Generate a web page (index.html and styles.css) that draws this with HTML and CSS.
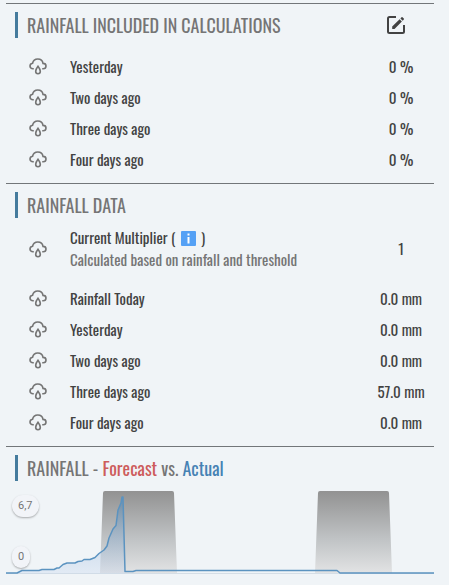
FILE: index.html
```html
<!DOCTYPE html>
<html lang="en">
<head>
  <meta charset="UTF-8">
  <meta name="viewport" content="width=device-width, initial-scale=1.0">
  <title>Rainfall</title>
  <link rel="stylesheet" href="styles.css">
</head>
<body>
  <!-- Shared icons -->
  <svg class="icon-defs" aria-hidden="true">
    <symbol id="icon-rain" viewBox="0 0 18 17">
      <path d="M4.800 10.800H4C2.200 10.800 1 9.600 1 8C1 6.500 2.100 5.400 3.600 5.200C4.100 2.700 6.200 1 8.800 1C11.500 1 13.600 2.800 14 5.400C15.800 5.400 17 6.500 17 8C17 9.700 15.800 10.800 14.200 10.800H13.200"/>
      <path d="M9 8.300C9 8.300 6.700 11.400 6.700 13.200C6.700 14.600 7.700 15.700 9 15.700C10.300 15.700 11.300 14.600 11.300 13.200C11.300 11.400 9 8.300 9 8.300Z"/>
    </symbol>
  </svg>

  <main class="card">
    <section class="section">
      <header class="section-header">
        <h2>RAINFALL INCLUDED IN CALCULATIONS</h2>
        <button class="btn-edit" type="button" aria-label="Edit">
          <svg viewBox="0 0 18 18">
            <path class="frame" d="M9 1H2.500Q1 1 1 2.500V15.500Q1 17 2.500 17H15.500Q17 17 17 15.500V9"/>
            <path class="pencil" d="M5.200 10.600L12.600 3.200L14.900 5.500L7.500 12.900H5.200ZM13.400 2.400L14.500 1.300Q15 .8 15.500 1.300L16.800 2.600Q17.300 3.100 16.800 3.600L15.700 4.700Z"/>
          </svg>
        </button>
      </header>
      <ul class="rows">
        <li class="row"><svg class="icon"><use href="#icon-rain"/></svg><span class="name">Yesterday</span><span class="value">0 %</span></li>
        <li class="row"><svg class="icon"><use href="#icon-rain"/></svg><span class="name">Two days ago</span><span class="value">0 %</span></li>
        <li class="row"><svg class="icon"><use href="#icon-rain"/></svg><span class="name">Three days ago</span><span class="value">0 %</span></li>
        <li class="row"><svg class="icon"><use href="#icon-rain"/></svg><span class="name">Four days ago</span><span class="value">0 %</span></li>
      </ul>
    </section>

    <section class="section">
      <header class="section-header">
        <h2>RAINFALL DATA</h2>
      </header>
      <ul class="rows">
        <li class="row row-tall">
          <svg class="icon"><use href="#icon-rain"/></svg>
          <div class="name">
            <div>Current Multiplier ( <svg class="info" viewBox="0 0 15 15" role="img" aria-label="info"><rect width="15" height="15" rx="1"/><path d="M6.500 2.500H8.500V4.500H6.500ZM6.500 6H8.500V12.500H6.500Z"/></svg> )</div>
            <div class="secondary">Calculated based on rainfall and threshold</div>
          </div>
          <span class="value">1</span>
        </li>
        <li class="row"><svg class="icon"><use href="#icon-rain"/></svg><span class="name">Rainfall Today</span><span class="value">0.0 mm</span></li>
        <li class="row"><svg class="icon"><use href="#icon-rain"/></svg><span class="name">Yesterday</span><span class="value">0.0 mm</span></li>
        <li class="row"><svg class="icon"><use href="#icon-rain"/></svg><span class="name">Two days ago</span><span class="value">0.0 mm</span></li>
        <li class="row"><svg class="icon"><use href="#icon-rain"/></svg><span class="name">Three days ago</span><span class="value">57.0 mm</span></li>
        <li class="row"><svg class="icon"><use href="#icon-rain"/></svg><span class="name">Four days ago</span><span class="value">0.0 mm</span></li>
      </ul>
    </section>

    <section class="section">
      <header class="section-header">
        <h2>RAINFALL - <span class="forecast">Forecast</span> vs. <span class="actual">Actual</span></h2>
      </header>
      <div class="chart">
        <svg class="plot" viewBox="0 0 428 85" preserveAspectRatio="none" role="img" aria-label="Forecast and actual rainfall">
          <defs>
            <linearGradient id="night" x1="0" y1="0" x2="0" y2="1">
              <stop offset="0" stop-color="#929292"/>
              <stop offset="0.6" stop-color="#c1c4c6"/>
              <stop offset="1" stop-color="#e2e3e4"/>
            </linearGradient>
            <linearGradient id="rain" x1="0" y1="0" x2="0" y2="1">
              <stop offset="0" stop-color="#4682b4" stop-opacity="0.5"/>
              <stop offset="1" stop-color="#b8cdec" stop-opacity="0.25"/>
            </linearGradient>
          </defs>
          <path class="baseline" d="M0 83.500H428"/>
          <path class="night" d="M94 83L97 3Q97 1 99 1H166Q168 1 168 3L171 83Z"/>
          <path class="night" d="M309 83L312 3Q312 1 314 1H381Q383 1 383 3L386 83Z"/>
          <path class="area" d="M0 83H11L16 80.500H33L36 79.500H48L51 78H53L57 74.500L61 73H69L72 71.500L76 71L78 69.500H84L89 67.500L93 63.500L98 60L101 56L103 48L107 39L110 35.500L112 20L115 13L116 7H117L119 82V83.500H0Z"/>
          <path class="line" d="M0 83H11L16 80.500H33L36 79.500H48L51 78H53L57 74.500L61 73H69L72 71.500L76 71L78 69.500H84L89 67.500L93 63.500L98 60L101 56L103 48L107 39L110 35.500L112 20L115 13L116 7H117L119 81.500H127L130 80.500H331L334 83H428"/>
        </svg>
        <div class="scale">
          <span class="badge">6,7</span>
          <span class="badge">0</span>
        </div>
      </div>
    </section>
  </main>
</body>
</html>
```
FILE: styles.css
```css
body {
  margin: 0;
  background-color: #f0f4f7;
  color: #424242;
  font-family: Oswald, "Roboto Condensed", "Liberation Sans Narrow", "Liberation Sans", sans-serif;
  font-size: 15px;
}
.icon-defs {
  display: none;
}
.card {
  margin: 3px 15px 0 6px;
}
.section {
  border-top: 1px solid #727679;
  padding-top: 8px;
}
.section-header {
  display: flex;
  align-items: center;
  justify-content: space-between;
  margin-left: 9px;
  padding-right: 29px;
  border-left: 3px solid #457b9d;
  height: 26px;
}
h2 {
  margin: 0;
  padding-left: 9px;
  color: #757575;
  font-size: 18px;
  font-weight: 400;
  line-height: 26px;
  white-space: nowrap;
}
.forecast {
  color: #cd5c5c;
}
.actual {
  color: #4682b4;
}
.btn-edit {
  padding: 0;
  border: none;
  background: none;
  cursor: pointer;
}
.btn-edit svg {
  display: block;
  width: 18px;
  height: 18px;
}
.frame {
  fill: none;
  stroke: #424242;
  stroke-width: 2;
}
.pencil {
  fill: #424242;
}
/* Sensor rows */
.rows {
  margin: 0;
  padding: 12px 0 9px;
  list-style: none;
}
.row {
  display: grid;
  grid-template-columns: 64px 1fr 66px;
  align-items: center;
  min-height: 31px;
}
.row-tall {
  min-height: 44px;
  margin: -4px 0 12px;
}
.icon {
  width: 18px;
  height: 17px;
  margin: 2px 0 0 23px;
  fill: none;
  stroke: #757575;
  stroke-width: 1.6;
}
.name {
  line-height: 22px;
}
.secondary {
  color: #757575;
}
.value {
  text-align: center;
}
.info {
  width: 15px;
  height: 15px;
  margin: 0 2px;
  vertical-align: -2px;
}
.info rect {
  fill: #55a1f5;
}
.info path {
  fill: #fff;
}
/* Rainfall graph */
.chart {
  position: relative;
  margin-top: 9px;
}
.plot {
  display: block;
  width: 100%;
  height: 85px;
}
.baseline {
  stroke: #d5dee6;
}
.night {
  fill: url(#night);
}
.area {
  fill: url(#rain);
}
.line {
  fill: none;
  stroke: #5b93c0;
  stroke-width: 1.5;
  stroke-linejoin: round;
}
.scale {
  position: absolute;
  top: 5px;
  bottom: 7px;
  left: 6px;
  display: flex;
  flex-direction: column;
  align-items: flex-start;
  justify-content: space-between;
}
.badge {
  padding: 0 6px;
  border-radius: 11px;
  background-color: #f2f4f8;
  box-shadow: 0 1px 2px rgba(0, 0, 0, 0.3);
  color: #757575;
  font-family: Roboto, sans-serif;
  font-size: 11px;
  line-height: 22px;
}
```
